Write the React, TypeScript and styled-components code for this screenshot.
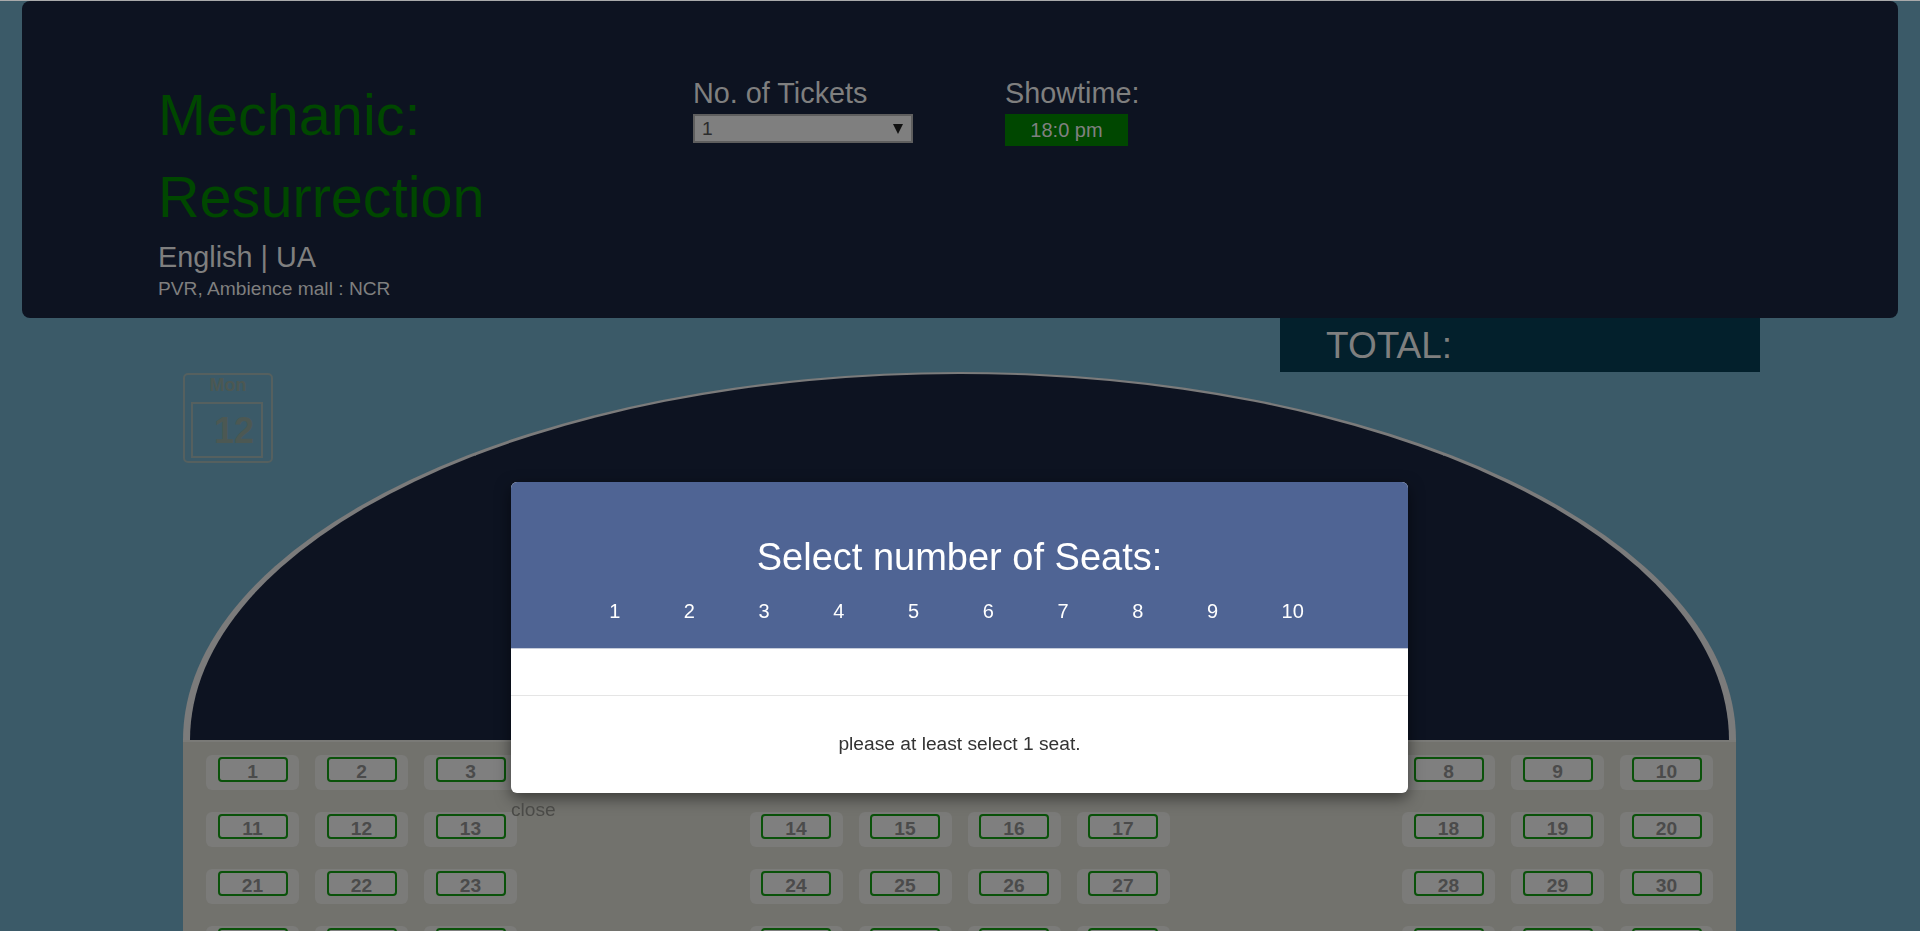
import styled, { createGlobalStyle } from "styled-components";

const GlobalStyle = createGlobalStyle`
  html, body {
    margin: 0;
    padding: 0;
    height: 931px;
    overflow: hidden;
  }
  body {
    background-color: #3b5a68;
    font-family: "Liberation Sans", Arial, sans-serif;
  }
`;

const Page = styled.div`
  border-top: 1px solid #a9aaab;
  padding: 0 22px;
  position: relative;
`;

const Header = styled.header`
  height: 317px;
  box-sizing: border-box;
  background-color: #0d1321;
  border-radius: 8px;
  padding: 73px 0 0 136px;
  display: flex;
  align-items: flex-start;
`;

const TitleCol = styled.div`
  width: 535px;
`;

const MovieTitle = styled.h1`
  margin: 0;
  font-size: 57.6px;
  line-height: 82px;
  font-weight: normal;
  color: #004700;
`;

const Language = styled.div`
  margin-top: 2px;
  font-size: 28.8px;
  line-height: 34px;
  color: #7f7f7f;
`;

const Venue = styled.div`
  margin-top: 4px;
  font-size: 19.2px;
  line-height: 22px;
  color: #7f7f7f;
`;

const FieldCol = styled.div<{ $width: number }>`
  width: ${(p) => p.$width}px;
  margin-top: 2px;
`;

const FieldLabel = styled.div`
  font-size: 28.8px;
  line-height: 34px;
  color: #7f7f7f;
`;

const SelectBox = styled.div`
  margin-top: 4px;
  width: 220px;
  height: 29px;
  box-sizing: border-box;
  background-color: #7f7f7f;
  border: 2px solid #5e5e5e;
  display: flex;
  align-items: center;
  justify-content: space-between;
  padding: 1px 8px 0 7px;
  font-size: 19.2px;
  color: #2c2c2c;
`;

const Arrow = styled.span`
  width: 0;
  height: 0;
  border-left: 5px solid transparent;
  border-right: 5px solid transparent;
  border-top: 10px solid #111111;
`;

const TimeButton = styled.div`
  margin-top: 4px;
  width: 123px;
  height: 32px;
  background-color: #004700;
  color: #808080;
  font-size: 20px;
  line-height: 33px;
  text-align: center;
`;

const TotalRow = styled.div`
  display: flex;
  justify-content: flex-end;
  padding-right: 138px;
`;

const TotalBox = styled.div`
  width: 480px;
  height: 54px;
  box-sizing: border-box;
  background-color: #03202c;
  padding: 1px 0 0 46px;
  font-size: 37px;
  line-height: 54px;
  color: #7f7f7f;
`;

const Theatre = styled.section`
  margin-left: 161px;
  width: 1553px;
`;

const Calendar = styled.div`
  float: left;
  margin-top: 1px;
  width: 90px;
  height: 90px;
  box-sizing: border-box;
  border: 2px solid #55605f;
  border-radius: 5px;
`;

const CalDay = styled.div`
  text-align: center;
  font-weight: bold;
  font-size: 18px;
  line-height: 20px;
  color: #4c5853;
`;

const CalDate = styled.div`
  margin: 7px 0 0 6px;
  width: 72px;
  height: 56px;
  box-sizing: border-box;
  border: 2px solid #55605f;
  padding: 7px 0 0 21px;
  font-weight: bold;
  font-size: 36px;
  line-height: 40px;
  color: #4c5853;
`;

const Screen = styled.div`
  height: 368px;
  box-sizing: border-box;
  background-color: #0d1321;
  border-style: solid;
  border-color: #7b7b7b;
  border-width: 2px 7px 0 7px;
  border-radius: 50% 50% 0 0 / 100% 100% 0 0;
`;

const SeatArea = styled.div`
  background-color: #72726d;
  border-top: 2px solid #7a7a77;
  padding: 13px 23px 0 23px;
  height: 400px;
`;

const SeatRow = styled.div`
  display: flex;
  justify-content: space-between;
  margin-bottom: 22px;
`;

const SeatGroup = styled.div`
  display: flex;
  gap: 16px;
`;

const SeatSlot = styled.div`
  width: 93px;
  height: 35px;
  box-sizing: border-box;
  background-color: #7b7b79;
  border-radius: 6px;
  padding-top: 2px;
  display: flex;
  justify-content: center;
`;

const Seat = styled.div`
  width: 70px;
  height: 25px;
  box-sizing: border-box;
  border: 2px solid #0a520a;
  border-radius: 4px;
  background-color: #7f7f7f;
  padding-top: 3px;
  text-align: center;
  font-weight: bold;
  font-size: 19.2px;
  line-height: 20px;
  color: #4b4b4b;
`;

const ModalLayer = styled.div`
  position: fixed;
  top: 482px;
  left: 511px;
  width: 897px;
`;

const ModalBox = styled.div`
  background-color: #ffffff;
  border-radius: 6px;
  box-shadow: 0 5px 15px rgba(0, 0, 0, 0.5);
  overflow: hidden;
`;

const ModalHead = styled.div`
  height: 167px;
  box-sizing: border-box;
  background-color: #4f6494;
  border-bottom: 1px solid #c6ccda;
  padding-top: 53px;
  text-align: center;
  color: #ffffff;
`;

const ModalTitle = styled.div`
  font-size: 38px;
  line-height: 44px;
`;

const CountList = styled.div`
  margin-top: 20px;
  display: flex;
  justify-content: center;
  gap: 63.6px;
  padding-right: 6px;
  font-size: 20px;
  line-height: 24px;
`;

const ModalBody = styled.div`
  height: 46px;
  border-bottom: 1px solid #e5e5e5;
`;

const ModalFooter = styled.div`
  height: 97px;
  box-sizing: border-box;
  padding-top: 37px;
  text-align: center;
  font-size: 19.2px;
  line-height: 22px;
  color: #333333;
`;

const CloseLink = styled.div`
  margin-top: 6px;
  font-size: 19.2px;
  line-height: 22px;
  color: #4a4a47;
`;

const groups = [
  [0, 1, 2],
  [3, 4, 5, 6],
  [7, 8, 9],
];

export default function App() {
  const rows = [0, 1, 2, 3];
  return (
    <>
      <GlobalStyle />
      <Page>
        <Header>
          <TitleCol>
            <MovieTitle>Mechanic: Resurrection</MovieTitle>
            <Language>English | UA</Language>
            <Venue>PVR, Ambience mall : NCR</Venue>
          </TitleCol>
          <FieldCol $width={312}>
            <FieldLabel>No. of Tickets</FieldLabel>
            <SelectBox>
              <span>1</span>
              <Arrow />
            </SelectBox>
          </FieldCol>
          <FieldCol $width={200}>
            <FieldLabel>Showtime:</FieldLabel>
            <TimeButton>18:0 pm</TimeButton>
          </FieldCol>
        </Header>
        <TotalRow>
          <TotalBox>TOTAL:</TotalBox>
        </TotalRow>
        <Theatre>
          <Calendar>
            <CalDay>Mon</CalDay>
            <CalDate>12</CalDate>
          </Calendar>
          <Screen />
          <SeatArea>
            {rows.map((r) => (
              <SeatRow key={r}>
                {groups.map((g, gi) => (
                  <SeatGroup key={gi}>
                    {g.map((c) => (
                      <SeatSlot key={c}>
                        <Seat>{r * 10 + c + 1}</Seat>
                      </SeatSlot>
                    ))}
                  </SeatGroup>
                ))}
              </SeatRow>
            ))}
          </SeatArea>
        </Theatre>
        <ModalLayer>
          <ModalBox>
            <ModalHead>
              <ModalTitle>Select number of Seats:</ModalTitle>
              <CountList>
                {[1, 2, 3, 4, 5, 6, 7, 8, 9, 10].map((n) => (
                  <span key={n}>{n}</span>
                ))}
              </CountList>
            </ModalHead>
            <ModalBody />
            <ModalFooter>please at least select 1 seat.</ModalFooter>
          </ModalBox>
          <CloseLink>close</CloseLink>
        </ModalLayer>
      </Page>
    </>
  );
}
